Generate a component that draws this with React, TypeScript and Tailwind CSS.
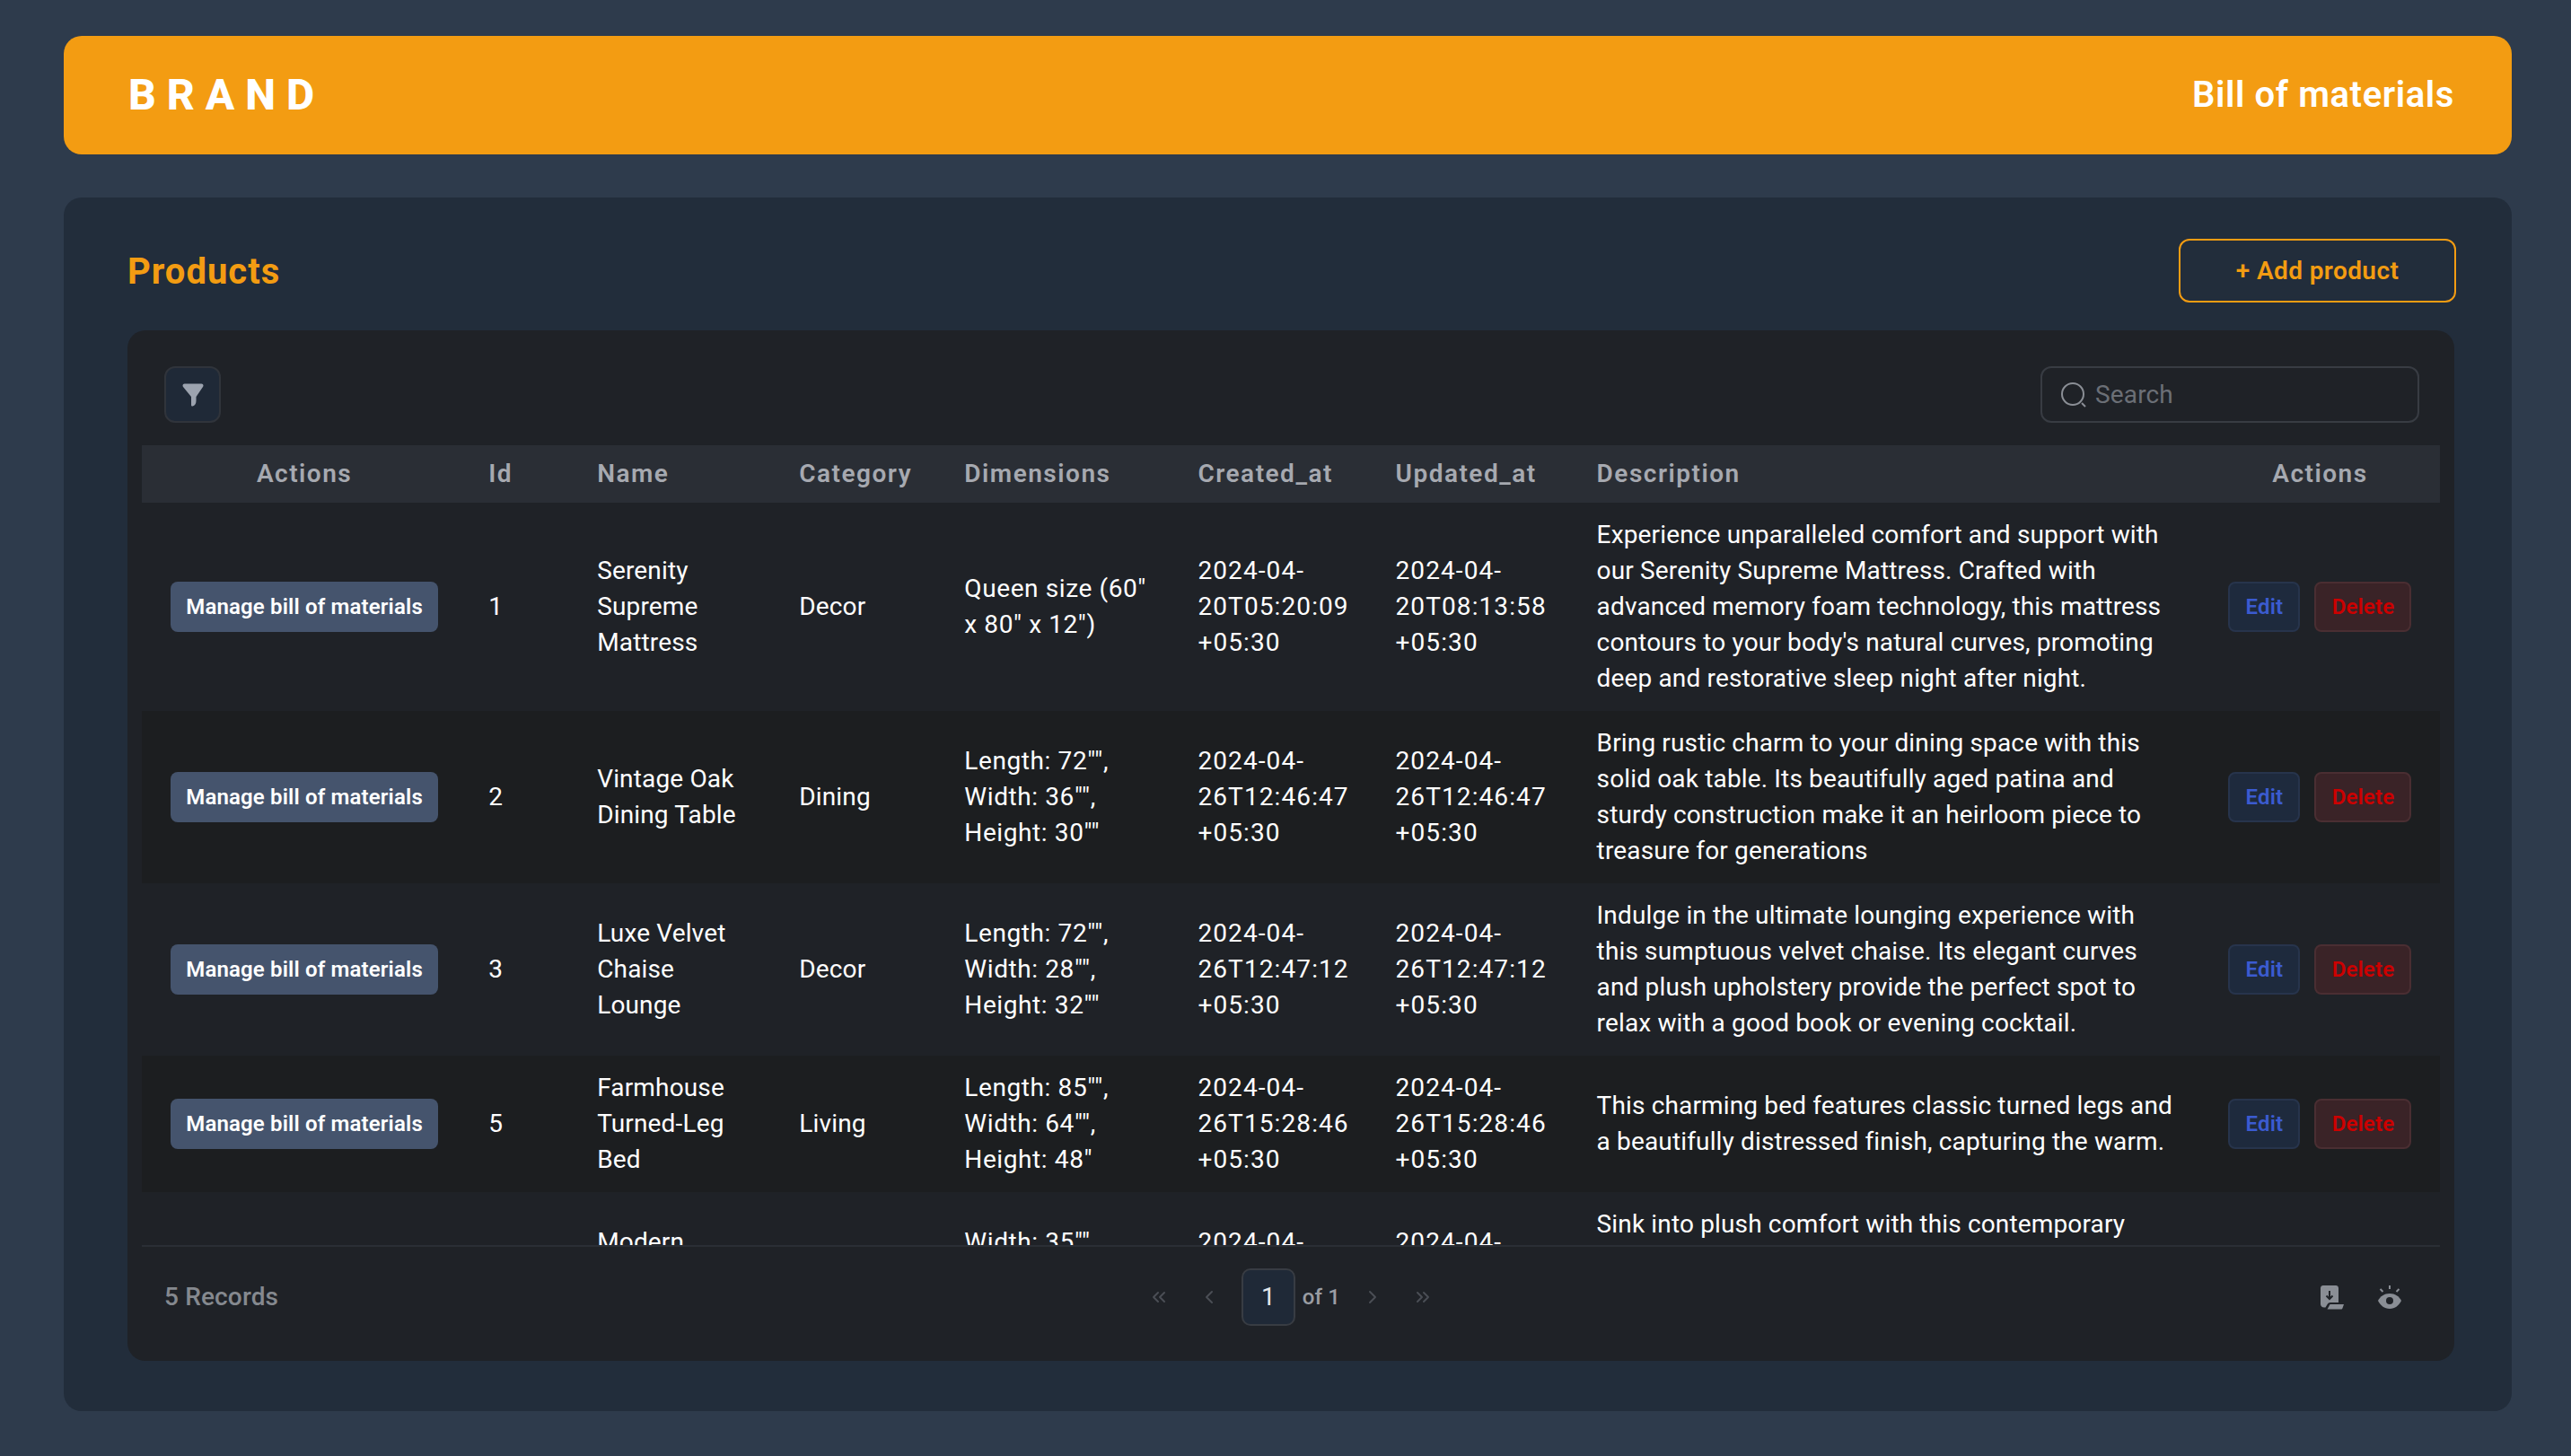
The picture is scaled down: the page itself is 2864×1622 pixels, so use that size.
import { ChevronLeft, ChevronRight, ChevronsLeft, ChevronsRight } from "lucide-react";

const products = [
  {
    id: 1,
    name: "Serenity\nSupreme\nMattress",
    category: "Decor",
    dimensions: 'Queen size (60"\nx 80" x 12")',
    created: "2024-04-\n20T05:20:09\n+05:30",
    updated: "2024-04-\n20T08:13:58\n+05:30",
    description:
      "Experience unparalleled comfort and support with\nour Serenity Supreme Mattress. Crafted with\nadvanced memory foam technology, this mattress\ncontours to your body's natural curves, promoting\ndeep and restorative sleep night after night.",
  },
  {
    id: 2,
    name: "Vintage Oak\nDining Table",
    category: "Dining",
    dimensions: 'Length: 72"",\nWidth: 36"",\nHeight: 30""',
    created: "2024-04-\n26T12:46:47\n+05:30",
    updated: "2024-04-\n26T12:46:47\n+05:30",
    description:
      "Bring rustic charm to your dining space with this\nsolid oak table. Its beautifully aged patina and\nsturdy construction make it an heirloom piece to\ntreasure for generations",
  },
  {
    id: 3,
    name: "Luxe Velvet\nChaise\nLounge",
    category: "Decor",
    dimensions: 'Length: 72"",\nWidth: 28"",\nHeight: 32""',
    created: "2024-04-\n26T12:47:12\n+05:30",
    updated: "2024-04-\n26T12:47:12\n+05:30",
    description:
      "Indulge in the ultimate lounging experience with\nthis sumptuous velvet chaise. Its elegant curves\nand plush upholstery provide the perfect spot to\nrelax with a good book or evening cocktail.",
  },
  {
    id: 5,
    name: "Farmhouse\nTurned-Leg\nBed",
    category: "Living",
    dimensions: 'Length: 85"",\nWidth: 64"",\nHeight: 48"',
    created: "2024-04-\n26T15:28:46\n+05:30",
    updated: "2024-04-\n26T15:28:46\n+05:30",
    description:
      "This charming bed features classic turned legs and\na beautifully distressed finish, capturing the warm.",
  },
  {
    id: 6,
    name: "Modern\nSectional\nSofa",
    category: "Living",
    dimensions: 'Width: 35"",\nDepth: 38"",\nHeight: 30""',
    created: "2024-04-\n26T15:30:02\n+05:30",
    updated: "2024-04-\n26T15:30:02\n+05:30",
    description:
      "Sink into plush comfort with this contemporary\nsectional sofa. Its clean lines and soft fabric\nmake it a welcoming centerpiece for family\ngatherings and quiet evenings.",
  },
];

const headers = ["Id", "Name", "Category", "Dimensions", "Created_at", "Updated_at", "Description"];

function FilterIcon() {
  return (
    <svg viewBox="0 0 24 26" className="w-[24px] h-[26px]" fill="#9ca3af">
      <path d="M.5 2.500C.5 1.200 1.500.5 2.500.5h19c1 0 2 .7 2 2 0 .6-.2 1-.5 1.400L15.500 15v4.500c0 3-1.500 5.500-3.800 6-.9.2-1.700-.3-1.700-1.200V15L1 3.900C.7 3.500.5 3 .5 2.500z" />
    </svg>
  );
}

function SearchIcon() {
  return (
    <svg viewBox="0 0 28 28" className="w-[28px] h-[28px]" fill="none" stroke="#8b8f96" strokeWidth="2">
      <circle cx="13" cy="13" r="12" />
      <path d="M23 23l4 4" />
    </svg>
  );
}

function ExportIcon() {
  return (
    <svg viewBox="0 0 26 27" className="w-[26px] h-[27px]">
      <path
        fill="#8a8e95"
        d="M3 0h14c1.700 0 3 1.300 3 3v16h-9c-2 0-3 1.200-4 3l-1.500 2.500H4c-2.200 0-4-1.600-4-3.500V3c0-1.700 1.300-3 3-3z"
      />
      <path fill="#8a8e95" d="M11 21h15l-1.500 4.200c-.2.800-.9 1.300-1.700 1.300H7.500L9.500 23c.4-1.200.8-2 1.500-2z" />
      <path d="M10 6v9M6.500 11.500L10 15l3.500-3.500" fill="none" stroke="#1f2227" strokeWidth="2" />
    </svg>
  );
}

function EyeIcon() {
  return (
    <svg viewBox="0 0 26 26" className="w-[26px] h-[26px]">
      <path fill="#8a8e95" d="M0 17c2.500-5 7-8 13-8s10.500 3 13 8c-2.500 5-7 9-13 9S2.500 22 0 17z" />
      <circle cx="13" cy="17" r="4" fill="#1f2227" />
      <path d="M13 0v4M2.500 4l3 3M23.500 4l-3 3" fill="none" stroke="#8a8e95" strokeWidth="2" />
    </svg>
  );
}

export default function App() {
  return (
    <div className="h-[1622px] bg-[#2e3b4c] pt-[40px] pl-[71px] pr-[66px] font-['Roboto','Liberation_Sans',sans-serif] text-[28px] leading-[40px] tracking-[0.15px] text-white">
      <header className="h-[132px] bg-[#f39c12] rounded-[20px] pl-[72px] pr-[64px] flex items-center justify-between">
        <div className="text-[48px] font-extrabold tracking-[12px]">BRAND</div>
        <div className="text-[40px] font-semibold tracking-[0.6px]">Bill of materials</div>
      </header>

      <main className="mt-[48px] h-[1352px] bg-[#222d3b] rounded-[20px] pt-[46px] pl-[71px] pr-[62px]">
        <div className="flex items-center justify-between h-[71px]">
          <h1 className="text-[40px] font-bold text-[#f39c12] tracking-[1px] mt-[2px]">Products</h1>
          <button className="w-[309px] h-[71px] border-2 border-[#f39c12] rounded-[12px] text-[#f39c12] font-semibold tracking-[0.4px]">
            + Add product
          </button>
        </div>

        <section className="mt-[31px] mr-[2px] h-[1148px] bg-[#1f2227] rounded-[20px] flex flex-col">
          <div className="flex justify-between pt-[40px] pl-[41px] pr-[39px]">
            <button className="w-[63px] h-[63px] rounded-[12px] border-2 border-[#30343b] bg-[#1f2937] flex items-center justify-center">
              <FilterIcon />
            </button>
            <div className="w-[422px] h-[63px] rounded-[12px] border-2 border-[#383c43] flex items-center gap-[10px] pl-[21px]">
              <SearchIcon />
              <span className="text-[#6b6f76]">Search</span>
            </div>
          </div>

          <div className="mt-[25px] mx-[16px] h-[891px] overflow-hidden">
            <table className="w-full table-fixed border-collapse">
              <colgroup>
                <col className="w-[362px]" />
                <col className="w-[121px]" />
                <col className="w-[225px]" />
                <col className="w-[184px]" />
                <col className="w-[260px]" />
                <col className="w-[220px]" />
                <col className="w-[224px]" />
                <col className="w-[696px]" />
                <col className="w-[267px]" />
              </colgroup>
              <thead>
                <tr className="h-[64px] bg-[#2a2e35] text-[#a6a9b0] tracking-[1.5px]">
                  <th className="font-semibold text-center">Actions</th>
                  {headers.map((h) => (
                    <th key={h} className="font-semibold text-left pl-[24px]">
                      {h}
                    </th>
                  ))}
                  <th className="font-semibold text-center">Actions</th>
                </tr>
              </thead>
              <tbody>
                {products.map((p, i) => (
                  <tr key={p.id} className={i % 2 === 1 ? "bg-[#1c1e20]" : ""}>
                    <td className="py-[16px] text-center align-middle">
                      <button className="w-[298px] h-[56px] rounded-[8px] bg-[#45546d] text-[24px] font-semibold">
                        Manage bill of materials
                      </button>
                    </td>
                    <td className="pl-[24px] py-[16px] align-middle">{p.id}</td>
                    <td className="pl-[24px] py-[16px] align-middle whitespace-pre">{p.name}</td>
                    <td className="pl-[24px] py-[16px] align-middle">{p.category}</td>
                    <td className="pl-[24px] py-[16px] align-middle whitespace-pre tracking-[0.6px]">{p.dimensions}</td>
                    <td className="pl-[24px] py-[16px] align-middle whitespace-pre tracking-[1.1px]">{p.created}</td>
                    <td className="pl-[24px] py-[16px] align-middle whitespace-pre tracking-[1.1px]">{p.updated}</td>
                    <td className="pl-[24px] py-[16px] align-middle whitespace-pre">{p.description}</td>
                    <td className="py-[16px] align-middle">
                      <div className="flex justify-center gap-[16px] text-[24px] font-semibold">
                        <button className="w-[80px] h-[56px] rounded-[8px] border-2 border-[#27344c] bg-[#1e2a3d] text-[#3b5bd0]">
                          Edit
                        </button>
                        <button className="w-[108px] h-[56px] rounded-[8px] border-2 border-[#4a2e32] bg-[#3a2327] text-[#cc0000]">
                          Delete
                        </button>
                      </div>
                    </td>
                  </tr>
                ))}
              </tbody>
            </table>
          </div>

          <div className="mx-[16px] border-t-2 border-[#2a2e35] pt-[24px] px-[25px] grid grid-cols-[1fr_auto_1fr] items-center">
            <div className="text-[#85898f] font-medium">5 Records</div>
            <div className="flex items-center text-[#4a4e55]">
              <span className="w-[56px] flex justify-center"><ChevronsLeft size={24} /></span>
              <span className="w-[56px] flex justify-center"><ChevronLeft size={24} /></span>
              <span className="ml-[8px] w-[60px] h-[64px] rounded-[10px] border-2 border-[#383c43] bg-[#1f2937] text-[#e5e7eb] flex items-center justify-center">
                1
              </span>
              <span className="w-[58px] text-center text-[24px] font-medium text-[#9a9da3]">of 1</span>
              <span className="w-[56px] flex justify-center"><ChevronRight size={24} /></span>
              <span className="w-[56px] flex justify-center"><ChevronsRight size={24} /></span>
            </div>
            <div className="flex justify-end items-center gap-[38px] pr-[18px]">
              <ExportIcon />
              <EyeIcon />
            </div>
          </div>
        </section>
      </main>
    </div>
  );
}
